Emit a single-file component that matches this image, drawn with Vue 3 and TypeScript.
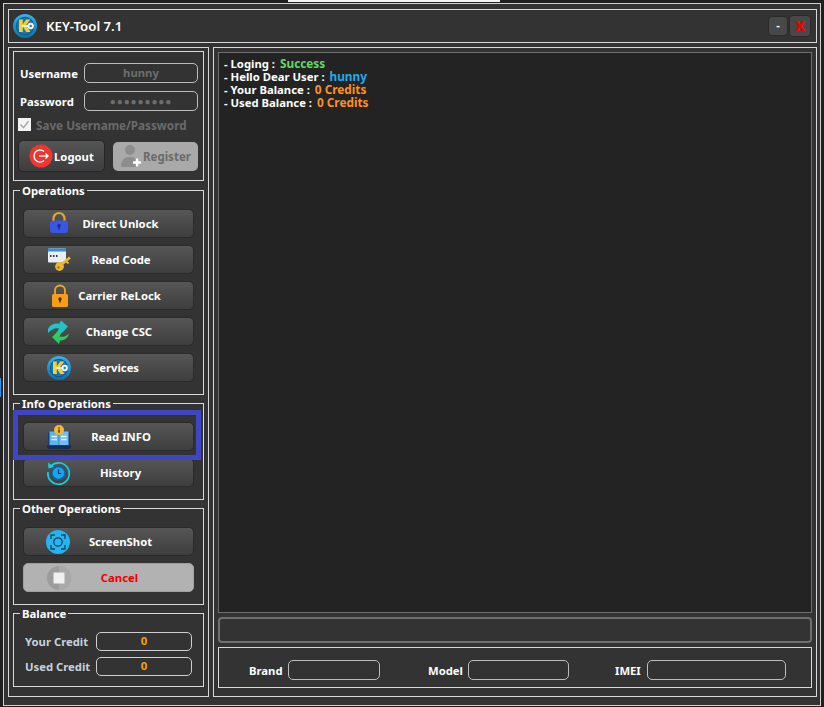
<script setup lang="ts">
interface Action {
  label: string
  icon: string
  nudge: number
  off?: boolean
}

const operations: Action[] = [
  { label: 'Direct Unlock', icon: 'lockBlue', nudge: 1 },
  { label: 'Read Code', icon: 'code', nudge: 0 },
  { label: 'Carrier ReLock', icon: 'lockOrange', nudge: 3 },
  { label: 'Change CSC', icon: 'csc', nudge: 4 },
  { label: 'Services', icon: 'logo', nudge: 10 },
]
const infoOps: Action[] = [
  { label: 'Read INFO', icon: 'info', nudge: 0 },
  { label: 'History', icon: 'history', nudge: 1 },
]
const otherOps: Action[] = [
  { label: 'ScreenShot', icon: 'shot', nudge: 1 },
  { label: 'Cancel', icon: 'stop', nudge: 3, off: true },
]
const groups = [
  { title: 'Operations', items: operations, mark: false },
  { title: 'Info Operations', items: infoOps, mark: true },
  { title: 'Other Operations', items: otherOps, mark: false },
]
const credits = [
  { label: 'Your Credit', value: '0' },
  { label: 'Used Credit', value: '0' },
]
const logLines = [
  { prefix: '- Loging :', value: 'Success', tone: 'green' },
  { prefix: '- Hello Dear User :', value: 'hunny', tone: 'blue' },
  { prefix: '- Your Balance :', value: '0 Credits', tone: 'orange' },
  { prefix: '- Used Balance :', value: '0 Credits', tone: 'orange' },
]
const deviceFields = [
  { label: 'Brand', cls: 'brand' },
  { label: 'Model', cls: 'model' },
  { label: 'IMEI', cls: 'imei' },
]
</script>

<template>
  <div class="screen">
    <div class="behind-strip"></div>
    <div class="behind-tab"></div>
    <svg class="defs" width="0" height="0" aria-hidden="true">
      <defs>
        <linearGradient id="logoRing" x1="0" y1="0" x2="0" y2="1">
          <stop offset="0" stop-color="#35b4ea" />
          <stop offset="1" stop-color="#0f6ea8" />
        </linearGradient>
        <symbol id="logoMark" viewBox="0 0 24 24">
          <circle cx="12" cy="12" r="12" fill="url(#logoRing)" />
          <circle cx="12" cy="12" r="9.200" fill="#14598a" />
          <circle cx="12" cy="12" r="8" fill="#1b78b4" />
          <path d="M6 5.500h3.800v4.800L13.400 5.500h3.900l-4.300 5.400 4.500 7.100h-4.200l-3.500-5.600V18H6z" fill="#f7ce2c" />
          <rect x="8.500" y="11" width="8" height="2" fill="#efe9c8" />
          <circle cx="17.700" cy="12" r="3.200" fill="#f2f2f2" />
          <circle cx="17.700" cy="12" r="1.200" fill="#1b78b4" />
        </symbol>
      </defs>
    </svg>

    <div class="window">
      <header class="titlebar">
        <svg class="title-logo" width="24" height="24"><use href="#logoMark" /></svg>
        <span class="title">KEY-Tool 7.1</span>
        <span class="win-btn min">-</span>
        <span class="win-btn close">x</span>
      </header>

      <div class="body">
        <aside class="left panel">
          <section class="group login">
            <div class="field-row">
              <label class="field-label">Username</label>
              <div class="field">hunny</div>
            </div>
            <div class="field-row second">
              <label class="field-label">Password</label>
              <div class="field dots">●●●●●●●●●</div>
            </div>
            <div class="save-row">
              <span class="checkbox">
                <svg width="13" height="13" viewBox="0 0 13 13">
                  <path d="M2.500 6.500l3 3.200 5-6.500" fill="none" stroke="#a8a8a8" stroke-width="1.500" />
                </svg>
              </span>
              <span class="save-text">Save Username/Password</span>
            </div>
            <div class="account-row">
              <div class="account-btn logout">
                <svg width="24" height="24" viewBox="0 0 24 24">
                  <circle cx="12" cy="12" r="11.500" fill="#f0362e" />
                  <path d="M15 7.500a6 6 0 1 0 0 9" fill="none" stroke="#fff" stroke-width="1.400" />
                  <path d="M10 12h9M16.500 9.500L19 12l-2.500 2.500" fill="none" stroke="#fff" stroke-width="1.400" />
                </svg>
                <span>Logout</span>
              </div>
              <div class="account-btn register">
                <svg width="24" height="26" viewBox="0 0 24 26">
                  <circle cx="11" cy="7" r="5" fill="#8d8d8d" />
                  <path d="M2 24c0-7 3.500-10 9-10s8 3 8 10z" fill="#8d8d8d" />
                  <path d="M18 15.500v8M14 19.500h8" stroke="#fff" stroke-width="2.400" />
                </svg>
                <span>Register</span>
              </div>
            </div>
          </section>

          <section v-for="g in groups" :key="g.title" class="group actions">
            <span class="legend">{{ g.title }}</span>
            <div v-if="g.mark" class="highlight"></div>
            <div
              v-for="b in g.items"
              :key="b.label"
              class="action"
              :class="{ off: b.off }"
            >
              <span class="icon">
                <svg v-if="b.icon === 'lockBlue'" width="24" height="24" viewBox="0 0 24 24">
                  <path d="M6.500 10V6.500a5.500 5.500 0 0 1 11 0V10" fill="none" stroke="#e7a52c" stroke-width="2.200" />
                  <rect x="3" y="8.500" width="18" height="12.500" rx="3" fill="#3a56e4" />
                  <circle cx="12" cy="13.800" r="1.800" fill="#1c2f96" />
                  <rect x="11.200" y="14" width="1.600" height="3.600" fill="#1c2f96" />
                </svg>
                <svg v-else-if="b.icon === 'code'" width="24" height="24" viewBox="-1 0 24 24">
                  <rect x="0" y="0.500" width="18" height="14" rx="1" fill="#e8eef2" />
                  <rect x="0" y="0.500" width="18" height="3" fill="#3d8ed0" />
                  <path d="M2 8h1.500M5 8h1.500M8 8h1.500" stroke="#334" stroke-width="1.800" />
                  <circle cx="11.500" cy="18.500" r="4.400" fill="#eab92e" />
                  <circle cx="10.500" cy="19.500" r="1.200" fill="#9a7412" />
                  <path d="M14 16l8-6.500" stroke="#eab92e" stroke-width="2.800" />
                  <path d="M18.500 13.500l2 2" stroke="#eab92e" stroke-width="1.800" />
                </svg>
                <svg v-else-if="b.icon === 'lockOrange'" width="24" height="24" viewBox="-1 0 24 24">
                  <path d="M7 10.500V6.500a5 5 0 0 1 10 0v4" fill="none" stroke="#f5a623" stroke-width="1.800" />
                  <rect x="4" y="10" width="16" height="13" rx="1.500" fill="#f79e17" />
                  <circle cx="12" cy="15" r="1.700" fill="#4a3006" />
                  <rect x="11.200" y="15" width="1.600" height="3.500" fill="#4a3006" />
                </svg>
                <svg v-else-if="b.icon === 'csc'" width="24" height="24" viewBox="0 0 24 24">
                  <path d="M1 9C3 4.500 7.500 3 12.500 3.500L14 0.500l7 6-6 6.500H9.500l2.500-4.500C8 7.500 4.500 9 1 13z" fill="#1ec4c8" />
                  <path d="M22 13.500c-1 4.500-4.500 7-9 7L12 24 5 17l5-5h5l-2.500 4.500c4 1 7-0.500 9.500-3z" fill="#2ecb62" />
                </svg>
                <svg v-else-if="b.icon === 'logo'" width="24" height="24"><use href="#logoMark" /></svg>
                <svg v-else-if="b.icon === 'info'" width="24" height="24" viewBox="0 0 24 24">
                  <path d="M0 20h24v2.500q-1 1.500-3 1.500H3q-2 0-3-1.500z" fill="#1c2c58" />
                  <path d="M1 7.500h22V21H1z" fill="#1c3a6e" />
                  <rect x="2.500" y="6.500" width="9.300" height="13.500" fill="#5db4f2" />
                  <rect x="12.200" y="6.500" width="9.300" height="13.500" fill="#6fc0f6" />
                  <path d="M4.500 11.500h5.500M4.500 14.500h5.500M14 11.500h5.500M14 14.500h5.500" stroke="#e8f6ff" stroke-width="1.300" />
                  <circle cx="12" cy="5" r="5" fill="#f5b82e" />
                  <path d="M12 2.200v1.200M12 4.500v3.300" stroke="#4a3608" stroke-width="1.500" />
                </svg>
                <svg v-else-if="b.icon === 'history'" width="24" height="24" viewBox="1 0 24 24">
                  <path d="M5 5a10.700 10.700 0 1 1-3 6" fill="none" stroke="#18d0dc" stroke-width="1.700" />
                  <path d="M2 1.500l.5 6 5.500-1.500z" fill="#18d0dc" />
                  <circle cx="12.500" cy="12" r="7.600" fill="#0f5f9c" />
                  <circle cx="12.500" cy="12" r="5.800" fill="#18a4ee" />
                  <path d="M12.500 8.500V12.500h2.800" fill="none" stroke="#0c3d62" stroke-width="1.200" />
                </svg>
                <svg v-else-if="b.icon === 'shot'" width="24" height="24" viewBox="1 0 24 24">
                  <circle cx="12" cy="12" r="12" fill="#27b3ee" />
                  <path d="M5 9V5h4M15 5h4v4M19 15v4h-4M9 19H5v-4" fill="none" stroke="#0d4560" stroke-width="1.300" />
                  <circle cx="12" cy="12" r="4.200" fill="none" stroke="#0d4560" stroke-width="1.300" />
                </svg>
                <svg v-else width="24" height="24" viewBox="0 0 24 24">
                  <circle cx="12" cy="12" r="12" fill="#9c9c9c" />
                  <path d="M12 0a12 12 0 0 1 0 24z" fill="#a9a9a9" />
                  <rect x="6.500" y="6.500" width="11" height="11" fill="#f0f0f0" />
                </svg>
              </span>
              <span class="action-label" :style="{ paddingRight: b.nudge + 'px' }">{{ b.label }}</span>
            </div>
          </section>

          <section class="group balance">
            <span class="legend">Balance</span>
            <div v-for="c in credits" :key="c.label" class="credit-row">
              <span class="credit-label">{{ c.label }}</span>
              <div class="credit-value">{{ c.value }}</div>
            </div>
          </section>
        </aside>

        <main class="right panel">
          <div class="log">
            <div v-for="l in logLines" :key="l.prefix" class="log-line">
              {{ l.prefix }} <span class="log-value" :class="l.tone">{{ l.value }}</span>
            </div>
          </div>
          <div class="progress"></div>
          <div class="device">
            <div v-for="f in deviceFields" :key="f.label" class="device-field" :class="f.cls">
              <span class="device-label">{{ f.label }}</span>
              <div class="device-input"></div>
            </div>
          </div>
        </main>
      </div>
    </div>
  </div>
</template>

<style>
html, body { margin: 0; background: #1b1b1b; }
</style>

<style scoped>
.screen {
  position: relative;
  width: 824px;
  height: 707px;
  box-sizing: border-box;
  padding: 3px 3px 1px 3px;
  background: #1f1f1f;
  font-family: "Noto Sans", "Open Sans", sans-serif;
  font-size: 11.300px;
  font-weight: 700;
  color: #fff;
  overflow: hidden;
}
.behind-strip {
  position: absolute;
  left: 288px;
  top: 0;
  width: 212px;
  height: 2px;
  background: #f4f2f2;
}
.behind-tab {
  position: absolute;
  left: 0;
  top: 378px;
  width: 1px;
  height: 19px;
  background: #2a94e8;
}
.defs { position: absolute; }
.window {
  position: relative;
  height: 703px;
  box-sizing: border-box;
  border: 1px solid #d0d0d0;
  background: #333;
  padding: 5px 3px 8px 4px;
  display: flex;
  flex-direction: column;
  gap: 4px;
}
.titlebar {
  height: 34px;
  flex: none;
  box-sizing: border-box;
  border: 1px solid #d8d8d8;
  display: flex;
  align-items: center;
  padding-left: 4px;
  padding-right: 5px;
}
.title-logo { flex: none; }
.title {
  margin-left: 9px;
  font-size: 13.200px;
  font-weight: 600;
  flex: 1;
}
.win-btn {
  display: flex;
  align-items: center;
  justify-content: center;
  background: #484848;
  border: 1px solid #2a2a2a;
  border-radius: 4px;
  box-sizing: border-box;
}
.min { width: 20px; height: 20px; margin-right: 1px; font-size: 11px; padding-bottom: 4px; }
.close { width: 22px; height: 22px; color: #f00000; font-size: 17px; font-weight: 800; padding-bottom: 4px; }

.body { flex: 1; display: flex; gap: 4px; min-height: 0; }
.panel { border: 1px solid #d8d8d8; box-sizing: border-box; }
.left {
  width: 201px;
  flex: none;
  padding: 3px 4px 0 4px;
  display: flex;
  flex-direction: column;
}
.group {
  position: relative;
  flex: none;
  border: 1px solid #d8d8d8;
  box-sizing: border-box;
}
.legend {
  position: absolute;
  top: -7px;
  left: 6px;
  padding: 0 2px;
  background: #333;
  line-height: 14px;
}
.login { height: 130px; padding: 11px 5px 0 4px; margin-bottom: 9px; }
.field-row { display: flex; align-items: center; height: 20px; padding-left: 2px; }
.field-row.second { margin-top: 8px; }
.field-label { width: 64px; flex: none; }
.field {
  width: 114px;
  height: 20px;
  box-sizing: border-box;
  border: 1px solid #bdbdbd;
  border-radius: 5px;
  color: #6e6e6e;
  text-align: center;
  line-height: 17px;
}
.field.dots { font-size: 10px; letter-spacing: 0.9px; line-height: 18px; }
.save-row { display: flex; align-items: center; margin-top: 7px; height: 13px; }
.checkbox {
  width: 13px;
  height: 13px;
  background: #f4f4f4;
  display: block;
  flex: none;
}
.checkbox svg { display: block; }
.save-text { margin-left: 5px; color: #6a6a6a; font-size: 11.700px; white-space: nowrap; }
.account-row { display: flex; align-items: center; margin-top: 9px; gap: 8px; }
.account-btn {
  box-sizing: border-box;
  border-radius: 5px;
  display: flex;
  align-items: center;
}
.logout {
  width: 87px;
  height: 32px;
  padding-left: 10px;
  gap: 1px;
  background: linear-gradient(#565656, #3d3d3d);
  border: 1px solid #262626;
}
.register {
  width: 85px;
  height: 29px;
  padding-left: 6px;
  background: #a9a9a9;
  color: #6b6b6b;
  font-size: 11.500px;
}
.actions { padding: 18px 8px 12px 9px; margin-bottom: 8px; }
.action {
  width: 171px;
  height: 29px;
  box-sizing: border-box;
  margin-bottom: 7px;
  padding: 0 24px 0 23px;
  border: 1px solid #2a2a2a;
  border-radius: 5px;
  background: linear-gradient(#565656, #3e3e3e);
  display: flex;
  align-items: center;
}
.action:last-of-type { margin-bottom: 0; }
.action.off { background: #b2b2b2; color: #f00000; border-color: #a0a0a0; }
.icon { width: 24px; height: 24px; flex: none; display: block; }
.icon svg { display: block; overflow: visible; }
.action-label { flex: 1; margin-left: 2px; text-align: center; white-space: nowrap; }
.highlight {
  position: absolute;
  left: -1px;
  top: 6px;
  width: 188px;
  height: 50px;
  box-sizing: border-box;
  border: 5px solid #3e46c4;
  z-index: 2;
  pointer-events: none;
}
.balance { height: 74px; padding: 18px 0 0 11px; }
.credit-row { display: flex; align-items: center; height: 19px; margin-bottom: 6px; }
.credit-label { width: 71px; flex: none; color: #c6d2de; }
.credit-value {
  width: 96px;
  height: 19px;
  box-sizing: border-box;
  border: 1px solid #cfcfcf;
  border-radius: 5px;
  color: #ff9d00;
  text-align: center;
  line-height: 16px;
}

.right {
  flex: 1;
  padding: 4px 4px 8px 4px;
  display: flex;
  flex-direction: column;
}
.log {
  height: 561px;
  box-sizing: border-box;
  border: 1px solid #6e6e6e;
  background: #232323;
  padding: 4px 0 0 5px;
  font-size: 11.300px;
}
.log-line { line-height: 13px; white-space: nowrap; }
.log-value { margin-left: 2px; font-size: 11.800px; }
.green { color: #62d962; }
.blue { color: #1cabf2; }
.orange { color: #ff8f1f; }
.progress {
  height: 26px;
  box-sizing: border-box;
  margin-top: 4px;
  border: 2px solid #707070;
  border-radius: 4px;
}
.device {
  height: 41px;
  box-sizing: border-box;
  margin-top: 4px;
  border: 1px solid #d8d8d8;
  display: flex;
  align-items: flex-start;
  padding: 12px 0 0 30px;
}
.device-field { display: flex; align-items: center; }
.device-label { white-space: nowrap; }
.device-input {
  height: 20px;
  box-sizing: border-box;
  border: 1px solid #bdbdbd;
  border-radius: 5px;
}
.brand { width: 179px; }
.brand .device-label { width: 39px; }
.brand .device-input { width: 92px; }
.model { width: 187px; }
.model .device-label { width: 40px; }
.model .device-input { width: 101px; }
.imei .device-label { width: 32px; }
.imei .device-input { width: 139px; }
</style>
